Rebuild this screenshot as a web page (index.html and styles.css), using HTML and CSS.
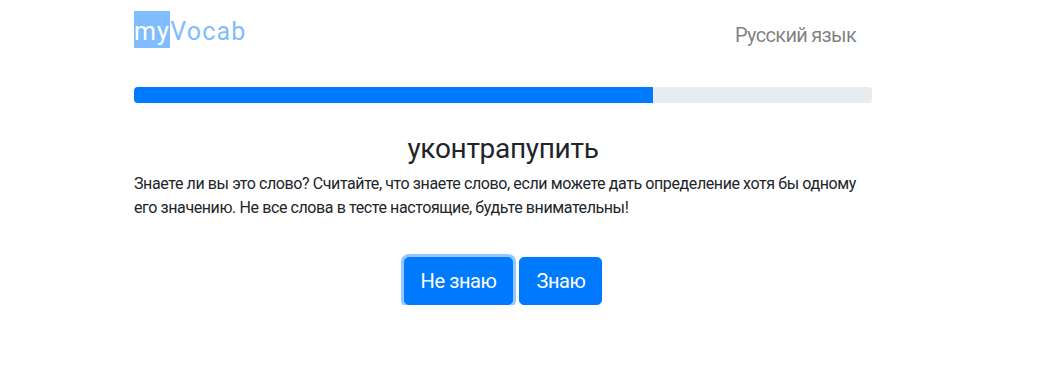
FILE: index.html
```html
<!DOCTYPE html>
<html lang="ru">
<head>
<meta charset="utf-8">
<title>myVocab</title>
<link rel="stylesheet" href="styles.css">
</head>
<body>
<div class="page">
  <nav class="navbar">
    <a class="brand" href="#"><span class="brand-sel">my</span>Vocab</a>
    <a class="nav-link" href="#">Русский язык</a>
  </nav>
  <div class="progress"><div class="progress-bar" style="width: 70.3%"></div></div>
  <h2 class="word">уконтрапупить</h2>
  <p class="question">Знаете ли вы это слово? Считайте, что знаете слово, если можете дать определение хотя бы одному его значению. Не все слова в тесте настоящие, будьте внимательны!</p>
  <div class="actions">
    <button class="btn btn-focus" type="button">Не знаю</button>
    <button class="btn" type="button">Знаю</button>
  </div>
</div>
</body>
</html>
```

FILE: styles.css
```css
html, body {
  margin: 0;
  padding: 0;
  background: #fff;
}
body {
  font-family: Roboto, "Liberation Sans", sans-serif;
  font-size: 16px;
  line-height: 1.5;
  color: #212529;
}
.page {
  width: 738px;
  margin-left: 134px;
}
.navbar {
  display: flex;
  justify-content: space-between;
  align-items: flex-start;
  padding-top: 11px;
  height: 39px;
}
.brand {
  font-size: 25px;
  line-height: 37px;
  letter-spacing: 1.2px;
  color: #80bdff;
  text-decoration: none;
  display: block;
}
.brand-sel {
  background: #80bdff;
  color: #fff;
  display: inline-block;
  line-height: 33px;
  padding-top: 4px;
}
.nav-link {
  font-size: 20px;
  line-height: 30px;
  margin-top: 9px;
  padding-right: 16px;
  letter-spacing: -0.7px;
  color: rgba(0, 0, 0, 0.5);
  text-decoration: none;
}
.progress {
  margin-top: 37px;
  height: 16px;
  background: #e9ecef;
  border-radius: 4px;
  overflow: hidden;
  display: flex;
}
.progress-bar {
  background: #007bff;
  height: 100%;
}
.word {
  margin: 29px 0 6px;
  font-size: 28px;
  font-weight: 400;
  line-height: 1.2;
  letter-spacing: -0.3px;
  text-align: center;
}
.question {
  margin: 0;
  letter-spacing: -0.4px;
}
.actions {
  margin-top: 37px;
  display: flex;
  justify-content: center;
  gap: 6px;
}
.btn {
  font-family: inherit;
  font-size: 20px;
  line-height: 30px;
  padding: 8px 16px;
  border: 1px solid #007bff;
  border-radius: 4.8px;
  background: #007bff;
  color: #fff;
  letter-spacing: -0.4px;
  cursor: pointer;
}
.btn-focus {
  box-shadow: 0 0 0 3px rgba(38, 143, 255, 0.5);
}
```
